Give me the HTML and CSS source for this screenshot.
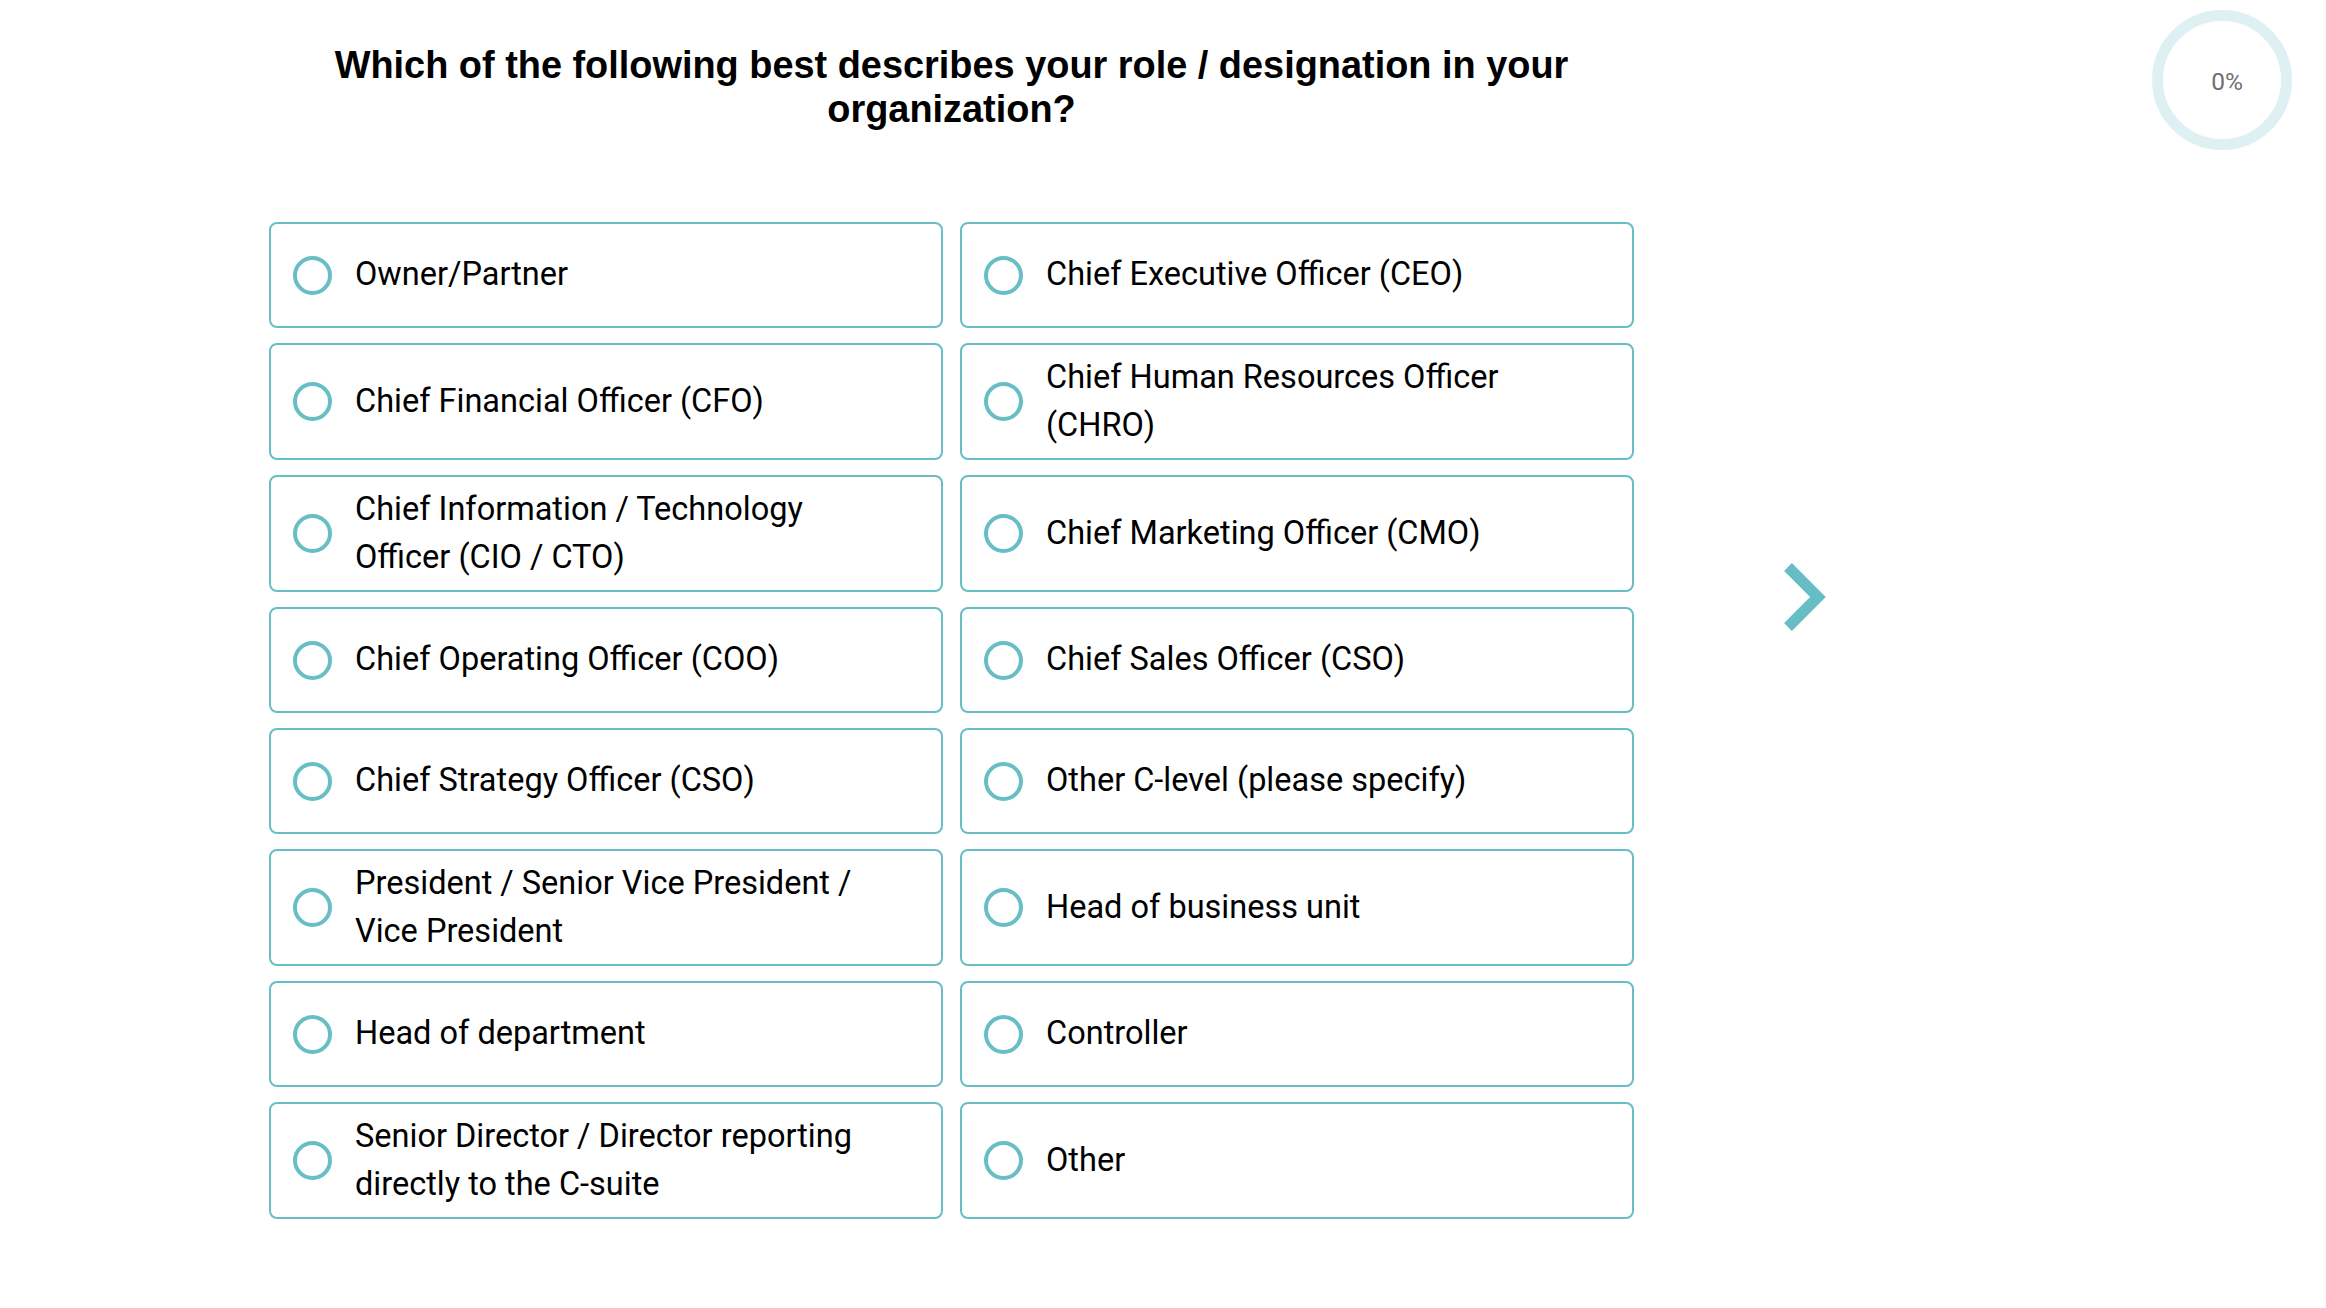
FILE: index.html
```html
<!DOCTYPE html>
<html lang="en">
<head>
<meta charset="utf-8">
<title>Role / designation</title>
<link rel="stylesheet" href="styles.css">
</head>
<body>
<div class="page">
  <section class="question">
    <h1 class="question-title">Which of the following best describes your role / designation in your organization?</h1>
    <div class="options">
      <label class="option"><span class="radio"></span><span class="option-text">Owner/Partner</span></label>
      <label class="option"><span class="radio"></span><span class="option-text">Chief Executive Officer (CEO)</span></label>
      <label class="option"><span class="radio"></span><span class="option-text">Chief Financial Officer (CFO)</span></label>
      <label class="option"><span class="radio"></span><span class="option-text">Chief Human Resources Officer (CHRO)</span></label>
      <label class="option"><span class="radio"></span><span class="option-text">Chief Information / Technology Officer (CIO / CTO)</span></label>
      <label class="option"><span class="radio"></span><span class="option-text">Chief Marketing Officer (CMO)</span></label>
      <label class="option"><span class="radio"></span><span class="option-text">Chief Operating Officer (COO)</span></label>
      <label class="option"><span class="radio"></span><span class="option-text">Chief Sales Officer (CSO)</span></label>
      <label class="option"><span class="radio"></span><span class="option-text">Chief Strategy Officer (CSO)</span></label>
      <label class="option"><span class="radio"></span><span class="option-text">Other C-level (please specify)</span></label>
      <label class="option"><span class="radio"></span><span class="option-text">President / Senior Vice President / Vice President</span></label>
      <label class="option"><span class="radio"></span><span class="option-text">Head of business unit</span></label>
      <label class="option"><span class="radio"></span><span class="option-text">Head of department</span></label>
      <label class="option"><span class="radio"></span><span class="option-text">Controller</span></label>
      <label class="option"><span class="radio"></span><span class="option-text">Senior Director / Director reporting directly to the C-suite</span></label>
      <label class="option"><span class="radio"></span><span class="option-text">Other</span></label>
    </div>
  </section>
  <nav class="next">
    <svg class="next-icon" width="50" height="76" viewBox="0 0 50 76" aria-label="Next">
      <path d="M8 7 L38 37 L8 67" fill="none" stroke="#66bec4" stroke-width="11" stroke-linejoin="miter" stroke-miterlimit="4"/>
    </svg>
  </nav>
  <div class="progress">
    <span class="progress-label">0%</span>
  </div>
</div>
</body>
</html>
```

FILE: styles.css
```css
* {
  box-sizing: border-box;
}

html, body {
  margin: 0;
  padding: 0;
  background: #ffffff;
}

.page {
  position: relative;
  display: flex;
  align-items: flex-start;
  width: 2326px;
  min-height: 1308px;
}

.question {
  margin-left: 269px;
  width: 1365px;
}

.question-title {
  margin: 43px 0 0;
  font-family: "Liberation Sans", Arial, sans-serif;
  font-weight: 700;
  font-size: 37.9px;
  line-height: 44px;
  text-align: center;
  color: #000;
}

.options {
  margin-top: 91px;
  display: grid;
  grid-template-columns: 1fr 1fr;
  column-gap: 17px;
  row-gap: 15px;
}

.option {
  display: flex;
  align-items: center;
  min-height: 106px;
  padding: 9px 60px 9px 22px;
  border: 2px solid #68bec5;
  border-radius: 8px;
  background: #fff;
  cursor: pointer;
}

.radio {
  flex: 0 0 auto;
  width: 39px;
  height: 39px;
  border: 4px solid #68bec5;
  border-radius: 50%;
  margin-right: 23px;
}

.option-text {
  font-family: Roboto, "Liberation Sans", sans-serif;
  font-size: 32.5px;
  line-height: 47.5px;
  color: #000;
}

.next {
  margin-left: 146px;
  padding-top: 560px;
}

.next-icon {
  display: block;
}

.progress {
  position: absolute;
  top: 10px;
  right: 34px;
  width: 140px;
  height: 140px;
  border: 11px solid #dff0f2;
  border-radius: 50%;
  display: flex;
  align-items: center;
  justify-content: center;
  padding: 3px 0 0 10px;
}

.progress-label {
  font-family: Roboto, "Liberation Sans", sans-serif;
  font-size: 24.5px;
  color: #6f6f6f;
}
```
